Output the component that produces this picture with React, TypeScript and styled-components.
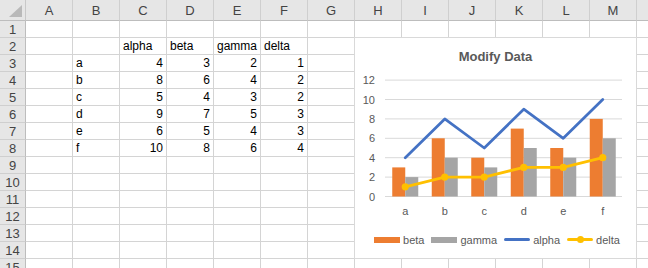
import styled, { createGlobalStyle } from "styled-components";

const GlobalStyle = createGlobalStyle`
  html, body {
    margin: 0;
    padding: 0;
    background: #ffffff;
    overflow: hidden;
  }
  body {
    font-family: "Liberation Sans", Arial, sans-serif;
  }
`;

const COLUMNS = ["A", "B", "C", "D", "E", "F", "G", "H", "I", "J", "K", "L", "M", "N"];
const ROW_COUNT = 15;

type CellValue = { text: string; numeric?: boolean };

const categories = ["a", "b", "c", "d", "e", "f"];
const series = {
  alpha: [4, 8, 5, 9, 6, 10],
  beta: [3, 6, 4, 7, 5, 8],
  gamma: [2, 4, 3, 5, 4, 6],
  delta: [1, 2, 2, 3, 3, 4],
};

// sheet contents keyed by "B3" style refs
const cells: Record<string, CellValue> = {
  C2: { text: "alpha" },
  D2: { text: "beta" },
  E2: { text: "gamma" },
  F2: { text: "delta" },
};
categories.forEach((c, i) => {
  const row = i + 3;
  cells[`B${row}`] = { text: c };
  cells[`C${row}`] = { text: String(series.alpha[i]), numeric: true };
  cells[`D${row}`] = { text: String(series.beta[i]), numeric: true };
  cells[`E${row}`] = { text: String(series.gamma[i]), numeric: true };
  cells[`F${row}`] = { text: String(series.delta[i]), numeric: true };
});

// chart geometry in page pixels
const PLOT_LEFT = 385;
const PLOT_RIGHT = 622;
const Y_ZERO = 196.5;
const UNIT = 9.7;
const CAT_W = (PLOT_RIGHT - PLOT_LEFT) / categories.length;
const BAR_W = 13;
const yOf = (v: number) => Y_ZERO - v * UNIT;
const xOf = (i: number) => PLOT_LEFT + CAT_W * (i + 0.5) + 0.5;

export default function App() {
  const rows = Array.from({ length: ROW_COUNT }, (_, i) => i + 1);

  return (
    <>
      <GlobalStyle />
      <Page>
        <Sheet>
          <Corner>
            <CornerTriangle />
          </Corner>
          {COLUMNS.map((c) => (
            <ColumnHeader key={c}>{c}</ColumnHeader>
          ))}
          {rows.map((r) => (
            <Row key={r} r={r} />
          ))}
        </Sheet>
        <Chart />
      </Page>
    </>
  );
}

function Row({ r }: { r: number }) {
  return (
    <>
      <RowHeader>{r}</RowHeader>
      {COLUMNS.map((c) => {
        const cell = cells[`${c}${r}`];
        return (
          <Cell key={c} $numeric={cell?.numeric}>
            {cell?.text}
          </Cell>
        );
      })}
    </>
  );
}

function Chart() {
  const gridValues = [0, 2, 4, 6, 8, 10, 12];
  const alphaPoints = series.alpha.map((v, i) => `${xOf(i)},${yOf(v)}`).join(" ");
  const deltaPoints = series.delta.map((v, i) => `${xOf(i)},${yOf(v)}`).join(" ");

  return (
    <ChartBox>
      <ChartTitle>Modify Data</ChartTitle>
      <PlotSvg viewBox="355 71 281 150" width={281} height={150}>
        {gridValues.map((v) => (
          <g key={v}>
            <line x1={PLOT_LEFT} x2={PLOT_RIGHT} y1={yOf(v)} y2={yOf(v)} stroke="#d9d9d9" strokeWidth={1} />
            <AxisText x={375} y={yOf(v) + 4} textAnchor="end">
              {v}
            </AxisText>
          </g>
        ))}
        {categories.map((c, i) => (
          <g key={c}>
            <rect x={xOf(i) - BAR_W} y={yOf(series.beta[i])} width={BAR_W} height={series.beta[i] * UNIT} fill="#ed7d31" />
            <rect x={xOf(i)} y={yOf(series.gamma[i])} width={BAR_W} height={series.gamma[i] * UNIT} fill="#a5a5a5" />
            <AxisText x={xOf(i)} y={215} textAnchor="middle">
              {c}
            </AxisText>
          </g>
        ))}
        <polyline points={alphaPoints} fill="none" stroke="#4472c4" strokeWidth={2.75} strokeLinejoin="round" strokeLinecap="round" />
        <polyline points={deltaPoints} fill="none" stroke="#ffc000" strokeWidth={2.75} strokeLinejoin="round" strokeLinecap="round" />
        {series.delta.map((v, i) => (
          <circle key={i} cx={xOf(i)} cy={yOf(v)} r={3.6} fill="#ffc000" />
        ))}
      </PlotSvg>
      <Legend>
        <LegendItem>
          <Swatch $color="#ed7d31" />
          beta
        </LegendItem>
        <LegendItem>
          <Swatch $color="#a5a5a5" />
          gamma
        </LegendItem>
        <LegendItem>
          <LineKey $color="#4472c4" />
          alpha
        </LegendItem>
        <LegendItem>
          <LineKey $color="#ffc000">
            <Marker />
          </LineKey>
          delta
        </LegendItem>
      </Legend>
    </ChartBox>
  );
}

const Page = styled.div`
  position: relative;
  width: 648px;
  height: 268px;
  overflow: hidden;
`;

const Sheet = styled.div`
  display: grid;
  grid-template-columns: 26px repeat(14, 47px);
  grid-template-rows: 21px repeat(15, 17px);
  font-family: "Liberation Sans", Arial, sans-serif;
`;

const Corner = styled.div`
  background: #e6e6e6;
  border-right: 1px solid #c8c8c8;
  border-bottom: 1px solid #bdbdbd;
  box-sizing: border-box;
  display: flex;
  align-items: flex-end;
  justify-content: flex-end;
  padding: 0 3px 3px 0;
`;

const CornerTriangle = styled.span`
  width: 0;
  height: 0;
  border-left: 13px solid transparent;
  border-bottom: 12px solid #b9b9b9;
`;

const ColumnHeader = styled.div`
  background: #e6e6e6;
  border-right: 1px solid #cfcfcf;
  border-bottom: 1px solid #bdbdbd;
  box-sizing: border-box;
  display: flex;
  align-items: center;
  justify-content: center;
  color: #444444;
  font-size: 13px;
  padding-top: 1px;
`;

const RowHeader = styled.div`
  background: #e6e6e6;
  border-right: 1px solid #bdbdbd;
  border-bottom: 1px solid #cfcfcf;
  box-sizing: border-box;
  display: flex;
  align-items: center;
  justify-content: center;
  color: #444444;
  font-size: 13px;
`;

const Cell = styled.div<{ $numeric?: boolean }>`
  border-right: 1px solid #d4d4d4;
  border-bottom: 1px solid #d4d4d4;
  box-sizing: border-box;
  display: flex;
  align-items: center;
  justify-content: ${(p) => (p.$numeric ? "flex-end" : "flex-start")};
  padding: 0 3px 0 3px;
  font-size: 12px;
  color: #000000;
  white-space: nowrap;
  overflow: visible;
`;

const ChartBox = styled.div`
  position: absolute;
  left: 354px;
  top: 37px;
  width: 283px;
  height: 222px;
  box-sizing: border-box;
  border: 1px solid #d9d9d9;
  background: #ffffff;
  display: flex;
  flex-direction: column;
`;

const ChartTitle = styled.div`
  height: 33px;
  box-sizing: border-box;
  padding-top: 4px;
  display: flex;
  align-items: center;
  justify-content: center;
  font-size: 13px;
  font-weight: bold;
  color: #595959;
`;

const PlotSvg = styled.svg`
  display: block;
  flex: none;
`;

const AxisText = styled.text`
  font-family: "Liberation Sans", Arial, sans-serif;
  font-size: 11px;
  fill: #595959;
`;

const Legend = styled.div`
  flex: 1;
  display: flex;
  align-items: center;
  justify-content: center;
  gap: 7px;
  padding-left: 3px;
  font-size: 11px;
  color: #595959;
`;

const LegendItem = styled.div`
  display: flex;
  align-items: center;
  gap: 3px;
`;

const Swatch = styled.span<{ $color: string }>`
  width: 26px;
  height: 6px;
  background: ${(p) => p.$color};
`;

const LineKey = styled.span<{ $color: string }>`
  position: relative;
  width: 26px;
  height: 3px;
  border-radius: 1.5px;
  background: ${(p) => p.$color};
  display: flex;
  align-items: center;
  justify-content: center;
`;

const Marker = styled.span`
  width: 7px;
  height: 7px;
  border-radius: 50%;
  background: #ffc000;
  flex: none;
`;
